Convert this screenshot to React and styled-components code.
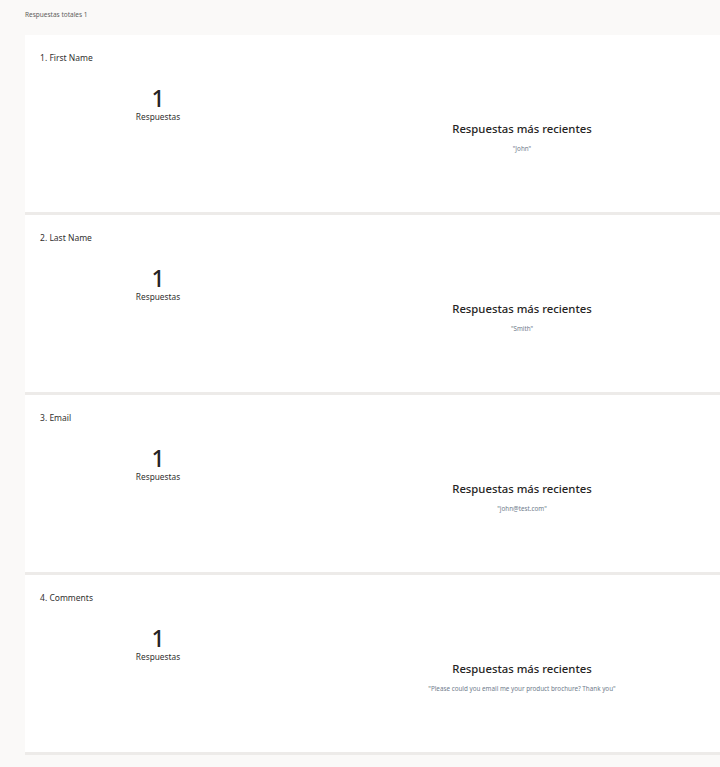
import React from 'react';
import styled, { createGlobalStyle } from 'styled-components';

const questions = [
  { id: 1, title: 'First Name', count: 1, latest: '"John"' },
  { id: 2, title: 'Last Name', count: 1, latest: '"Smith"' },
  { id: 3, title: 'Email', count: 1, latest: '"john@test.com"' },
  { id: 4, title: 'Comments', count: 1, latest: '"Please could you email me your product brochure? Thank you"' },
];

const App = () => {
  return (
    <Page>
      <GlobalStyle />
      <Total>Respuestas totales 1</Total>
      <CardList>
        {questions.map((q) => (
          <Card key={q.id}>
            <QuestionTitle>
              {q.id}. {q.title}
            </QuestionTitle>
            <CardBody>
              <CountBlock>
                <CountNumber>{q.count}</CountNumber>
                <CountLabel>Respuestas</CountLabel>
              </CountBlock>
              <LatestBlock>
                <LatestHeading>Respuestas más recientes</LatestHeading>
                <LatestValue>{q.latest}</LatestValue>
              </LatestBlock>
            </CardBody>
          </Card>
        ))}
      </CardList>
    </Page>
  );
};

export default App;

const GlobalStyle = createGlobalStyle`
  html, body {
    margin: 0;
    padding: 0;
    background: #faf9f8;
    overflow: hidden;
  }
  body {
    font-family: "Noto Sans", "Open Sans", sans-serif;
    color: #323130;
  }
`;
const Page = styled.div`
  width: 720px;
  height: 767px;
  overflow: hidden;
  padding-left: 25px;
  box-sizing: border-box;
`;
const Total = styled.div`
  height: 35px;
  padding-top: 10px;
  box-sizing: border-box;
  font-size: 6.5px;
  color: #605e5c;
`;
const CardList = styled.div`
  display: flex;
  flex-direction: column;
  width: 780px;
`;
const Card = styled.div`
  height: 180px;
  box-sizing: border-box;
  background: #ffffff;
  border-bottom: 3px solid #edebe9;
  padding: 17px 15px 0;
`;
const QuestionTitle = styled.div`
  font-size: 8.5px;
  line-height: 12px;
  color: #323130;
`;
const CardBody = styled.div`
  display: grid;
  grid-template-columns: 236px 492px;
`;
const CountBlock = styled.div`
  display: flex;
  flex-direction: column;
  align-items: center;
  padding-top: 20px;
`;
const CountNumber = styled.div`
  font-size: 23px;
  line-height: 28px;
  font-weight: 500;
  color: #252423;
`;
const CountLabel = styled.div`
  font-size: 8.3px;
  line-height: 12px;
  margin-top: -1px;
`;
const LatestBlock = styled.div`
  display: flex;
  flex-direction: column;
  align-items: center;
  padding-top: 57px;
`;
const LatestHeading = styled.div`
  font-size: 11.3px;
  line-height: 16px;
  font-weight: 500;
  color: #252423;
`;
const LatestValue = styled.div`
  font-size: 6.3px;
  line-height: 10px;
  margin-top: 7px;
  color: #707c8c;
`;
